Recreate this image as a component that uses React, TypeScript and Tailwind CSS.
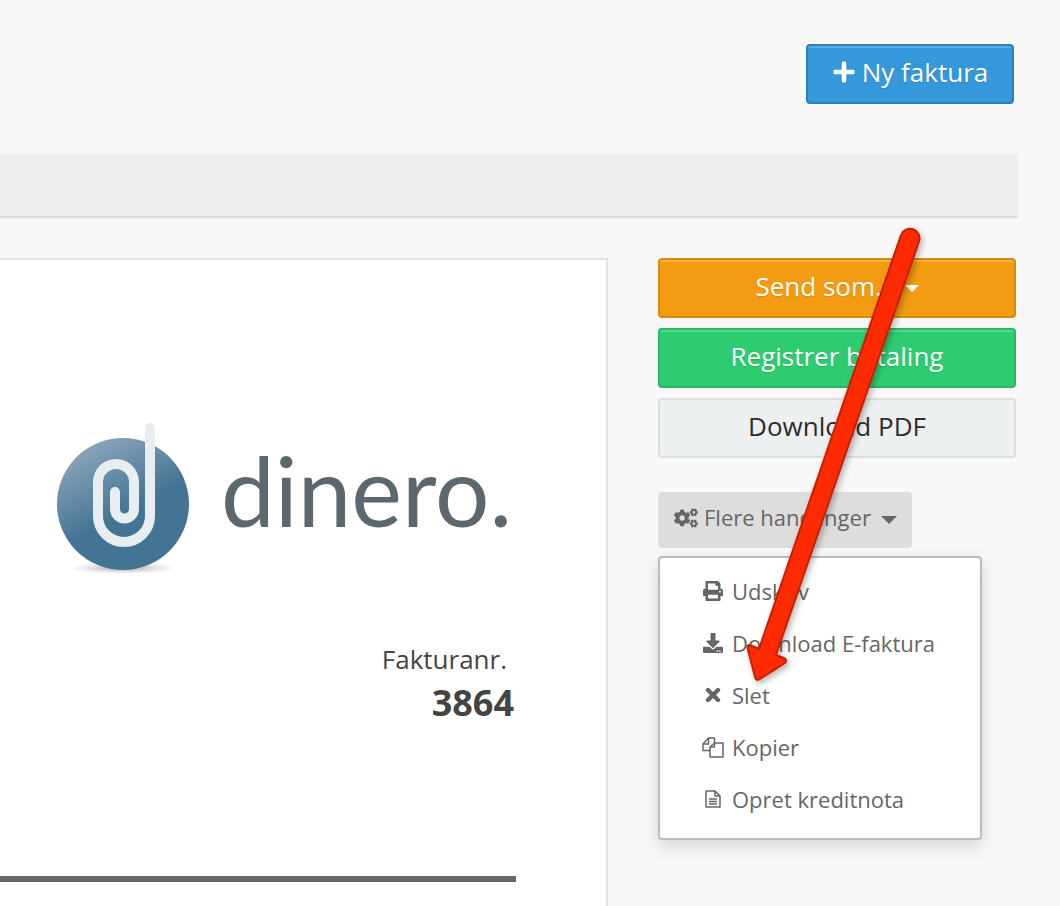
import React from "react";
import { FaPlus, FaCogs, FaPrint, FaDownload } from "react-icons/fa";

const btn = "flex h-[60px] items-center justify-center rounded-[4px] border-2 pb-[4px] text-[26px] leading-none";
const solid = "text-white shadow-[inset_0_2px_0_rgba(255,255,255,0.2)] [text-shadow:0_1px_1px_rgba(0,0,0,0.15)]";

function Item({ icon, label }: { icon: React.ReactNode; label: string }) {
  return (
    <div className="flex h-[52px] items-center pb-[6px] text-[22px] text-[#666666]">
      <span className="flex w-[72px] justify-center pl-[42px] pr-[8px] text-[#666666]">{icon}</span>
      <span>{label}</span>
    </div>
  );
}

function CloseIcon() {
  return (
    <svg width="16" height="16" viewBox="0 0 16 16" fill="none" stroke="#666666" strokeWidth="4.4" strokeLinecap="round" className="shrink-0">
      <path d="M3 3 L13 13 M13 3 L3 13" />
    </svg>
  );
}

function CopyIcon() {
  return (
    <svg width="22" height="21" viewBox="0 0 22 21" fill="none" stroke="#666666" strokeWidth="1.5" strokeLinejoin="round" className="shrink-0">
      <path d="M8 13.5 H1 V7 L6.5 1 H12.5 V6" />
      <path d="M6.5 1 V7 H1" />
      <path d="M8 20 V10 L12.5 6 H21 V20 Z" />
      <path d="M12.5 6 V10 H8" />
    </svg>
  );
}

function FileIcon() {
  return (
    <svg width="16" height="18" viewBox="0 0 16 18" fill="none" stroke="#666666" strokeWidth="1.5" strokeLinejoin="round" className="shrink-0">
      <path d="M1 1 H10 L15 6 V17 H1 Z" />
      <path d="M10 1 V6 H15" />
      <path d="M4 9 H12 M4 11.5 H12 M4 14 H12" />
    </svg>
  );
}

function Arrow() {
  return (
    <svg className="pointer-events-none absolute left-0 top-0" width="1060" height="906" viewBox="0 0 1060 906">
      <defs>
        <filter id="s" x="-20%" y="-20%" width="140%" height="140%">
          <feDropShadow dx="2" dy="3" stdDeviation="3" floodColor="#000" floodOpacity="0.3" />
        </filter>
      </defs>
      <path
        d="M901 235 A9.5 9.5 0 0 1 919 241.5 L776 655 L785 658.5 Q787 661 785 663 L760 679 Q756 681.5 755 677 L747.5 648 Q747 644 751 645.5 L759 649 Z"
        fill="#ff2a00"
        stroke="#c42000"
        strokeWidth="2"
        strokeLinejoin="round"
        filter="url(#s)"
      />
    </svg>
  );
}

function Logo() {
  return (
    <svg width="140" height="160" viewBox="0 0 140 160" className="shrink-0">
      <defs>
        <linearGradient id="g" x1="0.25" y1="0" x2="0.55" y2="0.55">
          <stop offset="0" stopColor="#8fa8bc" />
          <stop offset="1" stopColor="#437494" />
        </linearGradient>
        <radialGradient id="sh" cx="0.5" cy="0.5" r="0.5">
          <stop offset="0" stopColor="#888" stopOpacity="0.75" />
          <stop offset="1" stopColor="#aaa" stopOpacity="0" />
        </radialGradient>
      </defs>
      <ellipse cx="66" cy="147" rx="54" ry="6" fill="url(#sh)" />
      <circle cx="66" cy="83" r="66" fill="url(#g)" />
      <path
        d="M93 7 V95 A26 26 0 0 1 41 95 V61 A18 18 0 0 1 77 61 V88 A9.5 9.5 0 0 1 58 88 V71"
        fill="none"
        stroke="#e8edf1"
        strokeWidth="10"
        strokeLinecap="round"
      />
    </svg>
  );
}

export default function App() {
  return (
    <div className="relative h-[906px] w-[1060px] overflow-hidden bg-[#f8f8f8] font-['Open_Sans',sans-serif]">
      <header className="flex h-[154px] justify-end pr-[46px] pt-[44px]">
        <button className={`${btn} ${solid} w-[208px] gap-[6px] border-[#2a80b9] bg-[#3498db]`}>
          <FaPlus className="text-[24px]" />
          <span>Ny faktura</span>
        </button>
      </header>
      <div className="h-[64px] w-[1018px] border-b-2 border-[#dddddd] bg-[#eeeeee]" />
      <main className="flex gap-[50px] pt-[40px]">
        <section className="relative h-[700px] w-[608px] border-2 border-l-0 border-[#e2e2e2] bg-white">
          <div className="flex items-center pl-[57px] pt-[161px]">
            <Logo />
            <span className="ml-[24px] mt-[-22px] font-['Lato',sans-serif] text-[96px] font-normal leading-none text-[#5b6870]">dinero.</span>
          </div>
          <div className="mr-[92px] mt-[61px] text-right">
            <div className="pr-[7px] text-[26px] leading-[34px] text-[#444444]">Fakturanr.</div>
            <div className="text-[36px] font-bold leading-[54px] text-[#444444]">3864</div>
          </div>
          <div className="mr-[90px] mt-[146px] h-[6px] bg-[#666666]" />
        </section>
        <aside className="w-[358px]">
          <div className="flex flex-col gap-[10px]">
            <button className={`${btn} ${solid} gap-[9px] border-[#d68a10] bg-[#f39c12]`}>
              <span>Send som...</span>
              <span className="mt-[4px] h-0 w-0 border-x-[7px] border-t-[7px] border-x-transparent border-t-white" />
            </button>
            <button className={`${btn} ${solid} border-[#29b765] bg-[#2ecc71]`}>Registrer betaling</button>
            <button className={`${btn} border-[#dcdfe0] bg-[#ecf0f1] text-[#2c2c2c]`}>Download PDF</button>
          </div>
          <button className="mt-[34px] flex h-[56px] w-[254px] items-center rounded-[4px] bg-[#dddddd] pb-[5px] pl-[16px] text-[22px] text-[#666666]">
            <FaCogs className="mr-[6px] text-[24px]" />
            <span>Flere handlinger</span>
            <span className="ml-[10px] mt-[5px] h-0 w-0 border-x-[8px] border-t-[8px] border-x-transparent border-t-[#666666]" />
          </button>
          <div className="mt-[8px] w-[324px] rounded-[4px] border-2 border-[#bbbbbb] bg-white py-[10px] shadow-[0_6px_16px_rgba(0,0,0,0.15)]">
            <Item icon={<FaPrint className="shrink-0 text-[20px]" />} label="Udskriv" />
            <Item icon={<FaDownload className="shrink-0 text-[20px]" />} label="Download E-faktura" />
            <Item icon={<CloseIcon />} label="Slet" />
            <Item icon={<CopyIcon />} label="Kopier" />
            <Item icon={<FileIcon />} label="Opret kreditnota" />
          </div>
        </aside>
      </main>
      <Arrow />
    </div>
  );
}
